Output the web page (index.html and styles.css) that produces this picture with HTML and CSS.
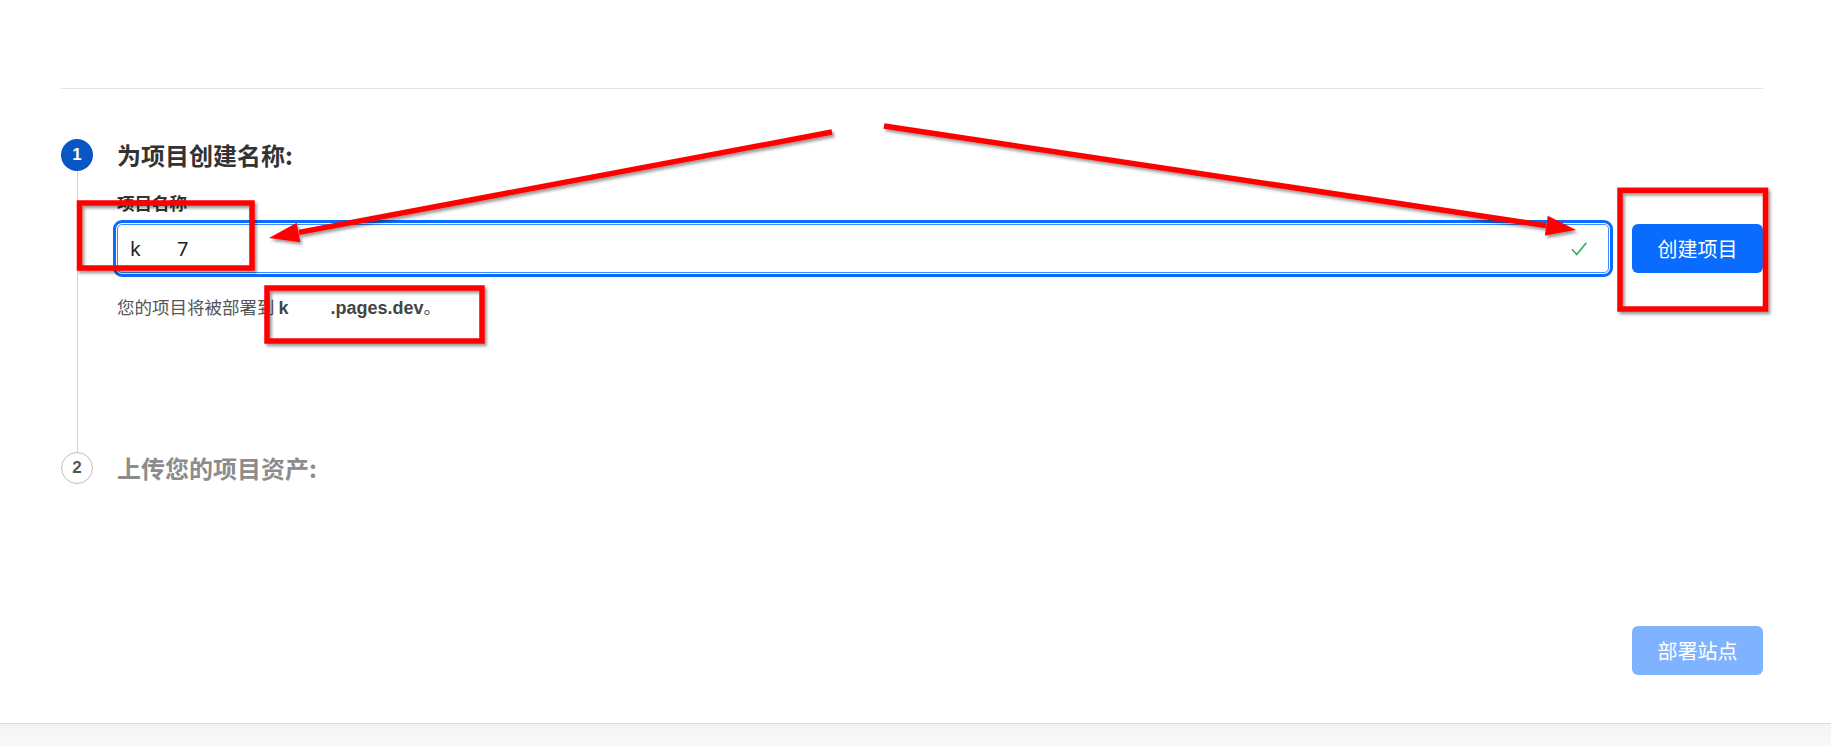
FILE: index.html
```html
<!DOCTYPE html>
<html lang="zh-CN">
<head>
<meta charset="utf-8">
<title>创建项目</title>
<link rel="stylesheet" href="styles.css">
</head>
<body>
<div class="page">
  <div class="topbar"></div>
  <ol class="steps">
    <li class="step step-active">
      <div class="marker"><span class="num">1</span><span class="rail"></span></div>
      <div class="step-body">
        <h2 class="step-title">为项目创建名称:</h2>
        <label class="field-label" for="pname">项目名称</label>
        <div class="field-row">
          <div class="input-wrap">
            <input id="pname" class="text-input" type="text" value="k       7">
            <svg class="check" viewBox="0 0 14 14"><polyline points="0.8,7.2 5,11.8 13.4,1.6" fill="none" stroke="#2fae5b" stroke-width="1.4"/></svg>
          </div>
          <button class="btn btn-primary" type="button">创建项目</button>
        </div>
        <p class="hint">您的项目将被部署到 <b>k<span class="gap"></span>.pages.dev</b>。</p>
      </div>
    </li>
    <li class="step step-pending">
      <div class="marker"><span class="num">2</span></div>
      <div class="step-body">
        <h2 class="step-title">上传您的项目资产:</h2>
      </div>
    </li>
  </ol>
  <div class="footer"><button class="btn btn-disabled" type="button">部署站点</button></div>
</div>
<div class="bottombar"></div>
<svg class="annot" viewBox="0 0 1831 747">
  <defs>
    <filter id="sh" filterUnits="userSpaceOnUse" x="0" y="0" width="1831" height="747">
      <feDropShadow dx="2" dy="2.5" stdDeviation="1.5" flood-color="#000" flood-opacity="0.4"/>
    </filter>
  </defs>
  <g filter="url(#sh)" fill="none" stroke="#ff0000" stroke-width="5.5">
    <rect x="79.5" y="203" width="172.5" height="65"/>
    <rect x="267" y="288" width="215" height="53"/>
    <rect x="1620" y="190.3" width="145.5" height="118.7"/>
  </g>
  <g filter="url(#sh)">
    <line x1="832" y1="132" x2="299" y2="232.4" stroke="#ff0000" stroke-width="5.5"/>
    <polygon points="269,238 300.3,242.3 296.7,222.7" fill="#ff0000"/>
    <line x1="884" y1="126" x2="1546" y2="225.6" stroke="#ff0000" stroke-width="5.5"/>
    <polygon points="1576,230 1544.8,235.5 1547.8,215.7" fill="#ff0000"/>
  </g>
</svg>
</body>
</html>
```

FILE: styles.css
```css
html, body {
  margin: 0;
  padding: 0;
  height: 747px;
  overflow: hidden;
  background: #fff;
}

body {
  position: relative;
  font-family: "Noto Sans", "Noto Sans CJK SC", sans-serif;
  color: #333;
}

.page {
  height: 723px;
  box-sizing: border-box;
  padding: 0 68px 0 61px;
  display: flex;
  flex-direction: column;
}

.topbar {
  flex: none;
  height: 88px;
  border-bottom: 1px solid #e3e3e3;
}

.steps {
  list-style: none;
  margin: 50px 0 0;
  padding: 0;
}

.step {
  display: grid;
  grid-template-columns: 32px 1fr;
  column-gap: 24px;
}

.step-active {
  min-height: 313px;
}

.marker {
  display: flex;
  flex-direction: column;
  align-items: center;
}

.num {
  flex: none;
  width: 32px;
  height: 32px;
  box-sizing: border-box;
  border-radius: 50%;
  display: flex;
  align-items: center;
  justify-content: center;
  font: bold 17px "Liberation Sans", sans-serif;
}

.step-active .num {
  background: #0a55c4;
  color: #fff;
}

.step-pending .num {
  background: #fff;
  border: 1px solid #bfbfbf;
  color: #555;
}

.rail {
  flex: 1;
  width: 1px;
  background: #cfcfcf;
}

.step-title {
  margin: 0;
  font-family: "Noto Sans CJK SC", sans-serif;
  font-size: 24px;
  line-height: 32px;
  font-weight: 700;
}

.step-active .step-title {
  color: #333;
}

.step-pending .step-title {
  color: #8c8c8c;
}

.field-label {
  display: block;
  margin-top: 20px;
  font-family: "Noto Sans CJK SC", sans-serif;
  font-size: 17.5px;
  line-height: 24px;
  font-weight: 700;
  color: #333;
}

.field-row {
  display: flex;
  gap: 23px;
  margin-top: 9px;
}

.input-wrap {
  flex: 1;
  position: relative;
}

.text-input {
  display: block;
  width: 100%;
  height: 49px;
  box-sizing: border-box;
  border: 1px solid #3d8bfd;
  border-radius: 5px;
  outline: 3px solid #0a6cff;
  outline-offset: 1.5px;
  padding: 0 44px 0 12px;
  font: 20px "Noto Sans", sans-serif;
  color: #222;
  background: #fff;
}

.check {
  position: absolute;
  right: 22px;
  top: 50%;
  width: 16px;
  height: 16px;
  transform: translateY(-50%);
}

.btn {
  flex: none;
  width: 131px;
  height: 49px;
  border: 0;
  border-radius: 6px;
  color: #fff;
  font: 20px "Noto Sans CJK SC", sans-serif;
  padding: 0;
}

.btn-primary {
  background: #0a6cff;
}

.btn-disabled {
  background: #80b3ff;
}

.hint {
  margin: 22px 0 0;
  font-family: "Noto Sans CJK SC", sans-serif;
  font-size: 17.5px;
  line-height: 24px;
  color: #555;
}

.hint b {
  font-family: "Liberation Sans", sans-serif;
  font-size: 18px;
  color: #444;
}

.gap {
  display: inline-block;
  width: 42px;
}

.footer {
  margin-top: auto;
  display: flex;
  justify-content: flex-end;
  padding-bottom: 48px;
}

.bottombar {
  height: 24px;
  border-top: 1px solid #dadada;
  background: linear-gradient(#f3f3f3, #fafafa);
}

.annot {
  position: absolute;
  left: 0;
  top: 0;
  width: 1831px;
  height: 747px;
  pointer-events: none;
}
```
